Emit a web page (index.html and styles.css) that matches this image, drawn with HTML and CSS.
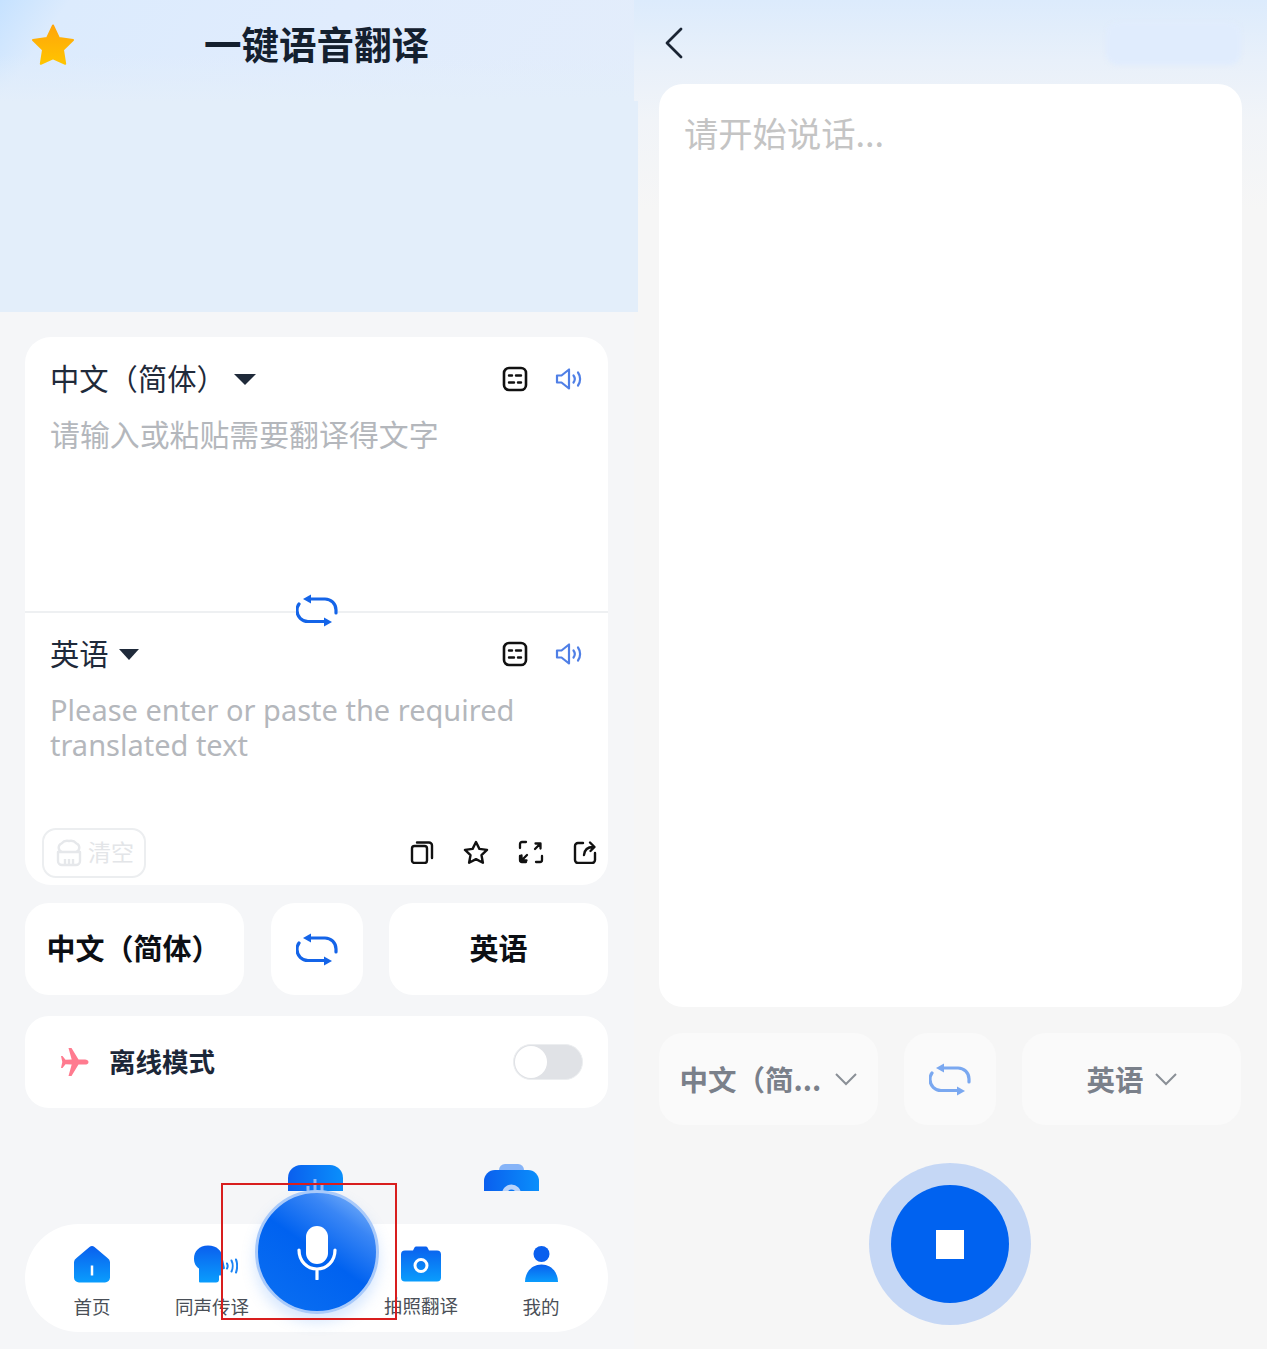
FILE: index.html
```html
<!DOCTYPE html>
<html lang="zh-CN">

<head>
    <meta charset="UTF-8">
    <meta name="viewport" content="width=device-width, initial-scale=1.0">
    <title>一键语音翻译</title>
    <link rel="stylesheet" href="styles.css">
</head>

<body>
    <svg class="defs" width="0" height="0">
        <defs>
            <linearGradient id="navBlue" x1="0" y1="0" x2="0" y2="1">
                <stop offset="0" stop-color="#0a5fee" />
                <stop offset="1" stop-color="#0a9dfd" />
            </linearGradient>
            <linearGradient id="peekBlue" x1="0" y1="0" x2="1" y2="0">
                <stop offset="0" stop-color="#0a5fee" />
                <stop offset="1" stop-color="#0a8ffb" />
            </linearGradient>
            <linearGradient id="starGold" x1="0" y1="0" x2="0" y2="1">
                <stop offset="0" stop-color="#ffa50a" />
                <stop offset="1" stop-color="#ffc400" />
            </linearGradient>
        </defs>
    </svg>

    <div class="screens">
        <!-- left screen -->
        <div class="screen-left">
            <div class="topbar">
                <svg class="star" width="44" height="42" viewBox="0 0 44 42">
                    <path d="M22 1.5l6 12.6 14 1.9-10 9.8 2.2 14-12.2-5.4-12.2 5.4 2.2-14-10-9.8 14-1.9z" fill="url(#starGold)" stroke="url(#starGold)" stroke-width="2" stroke-linejoin="round" />
                </svg>
                <div class="title">一键语音翻译</div>
            </div>
            <div class="banner"></div>

            <div class="content">
                <div class="card">
                    <div class="source">
                        <div class="lang-row">
                            <span class="lang-name">中文（简体）</span>
                            <span class="caret caret-wide"></span>
                            <svg class="note-icon" width="26" height="26" viewBox="0 0 26 26">
                                <rect x="2" y="2" width="22" height="22" rx="5" fill="none" stroke="#111" stroke-width="2.6" />
                                <path d="M7 9.5h3M14 9.5h5M7 16.5h5M16 16.5h3" stroke="#111" stroke-width="2.4" stroke-linecap="round" />
                            </svg>
                            <svg class="sound-icon" width="28" height="24" viewBox="0 0 28 24">
                                <path d="M2 8.5h4.5L14 2.5v19l-7.500-6H2z" fill="none" stroke="#4f7fe6" stroke-width="2.200" stroke-linejoin="round" />
                                <path d="M18.500 8.500c1.500 2 1.500 5 0 7M23 5.500c2.800 3.800 2.800 9.200 0 13" fill="none" stroke="#4f7fe6" stroke-width="2.200" stroke-linecap="round" />
                            </svg>
                        </div>
                        <div class="placeholder">请输入或粘贴需要翻译得文字</div>
                    </div>

                    <div class="divider">
                        <svg class="divider-swap" width="42" height="33" viewBox="0 0 42 33">
                            <use href="#swapShape" />
                        </svg>
                    </div>

                    <div class="target">
                        <div class="lang-row">
                            <span class="lang-name">英语</span>
                            <span class="caret"></span>
                            <svg class="note-icon" width="26" height="26" viewBox="0 0 26 26">
                                <rect x="2" y="2" width="22" height="22" rx="5" fill="none" stroke="#111" stroke-width="2.6" />
                                <path d="M7 9.5h3M14 9.5h5M7 16.5h5M16 16.5h3" stroke="#111" stroke-width="2.4" stroke-linecap="round" />
                            </svg>
                            <svg class="sound-icon" width="28" height="24" viewBox="0 0 28 24">
                                <path d="M2 8.5h4.5L14 2.5v19l-7.500-6H2z" fill="none" stroke="#4f7fe6" stroke-width="2.200" stroke-linejoin="round" />
                                <path d="M18.500 8.500c1.500 2 1.500 5 0 7M23 5.500c2.800 3.800 2.800 9.200 0 13" fill="none" stroke="#4f7fe6" stroke-width="2.200" stroke-linecap="round" />
                            </svg>
                        </div>
                        <div class="translated">Please enter or paste the required translated text</div>
                        <div class="card-foot">
                            <div class="clear-btn">
                                <svg width="26" height="28" viewBox="0 0 26 28">
                                    <path d="M6 13a4.500 4.500 0 0 1-.5-8.500A7.500 7.500 0 0 1 13 2a7.500 7.500 0 0 1 7.500 2.500A4.500 4.500 0 0 1 20 13M2 13h22v9a4 4 0 0 1-4 4H6a4 4 0 0 1-4-4zM9 20v6M13 20v6M17 20v6" fill="none" stroke="#e6e8eb" stroke-width="2.400" stroke-linejoin="round" />
                                </svg>
                                <span class="clear-text">清空</span>
                            </div>
                            <div class="foot-icons">
                                <svg width="24" height="24" viewBox="0 0 24 24">
                                    <rect x="2" y="6" width="15" height="17" rx="2.500" fill="none" stroke="#111" stroke-width="2.400" />
                                    <path d="M7 2.500h12a3 3 0 0 1 3 3V18" fill="none" stroke="#111" stroke-width="2.400" stroke-linecap="round" />
                                </svg>
                                <svg width="26" height="24" viewBox="0 0 26 24">
                                    <path d="M13 2l3.400 6.900 7.600 1-5.500 5.300 1.400 7.500-6.900-3.600-6.900 3.600 1.400-7.500L2 9.900l7.600-1z" fill="none" stroke="#111" stroke-width="2.400" stroke-linejoin="round" />
                                </svg>
                                <svg width="26" height="24" viewBox="0 0 26 24">
                                    <path d="M2 8V4a2 2 0 0 1 2-2h4M24 16v4a2 2 0 0 1-2 2h-4M8 22H4a2 2 0 0 1-2-2v-4M9 15l-5 5M3.500 15.500V20.500H8.500M17 9l5-5M17.500 3.500H22.500V8.500" fill="none" stroke="#111" stroke-width="2.300" stroke-linecap="round" stroke-linejoin="round" />
                                </svg>
                                <svg width="24" height="24" viewBox="0 0 24 24">
                                    <path d="M10 3H5a3 3 0 0 0-3 3v14a3 3 0 0 0 3 3h14a3 3 0 0 0 3-3v-7" fill="none" stroke="#111" stroke-width="2.400" stroke-linecap="round" />
                                    <path d="M11 15c.5-5 3.500-8 9-8M17 2.500l4.500 4.500-4 4" fill="none" stroke="#111" stroke-width="2.400" stroke-linecap="round" stroke-linejoin="round" />
                                </svg>
                            </div>
                        </div>
                    </div>
                </div>

                <div class="lang-buttons lang-buttons-main">
                    <div class="lang-btn">中文（简体）</div>
                    <div class="swap-btn">
                        <svg width="42" height="33" viewBox="0 0 42 33">
                            <use href="#swapShape" />
                        </svg>
                    </div>
                    <div class="lang-btn lang-btn-short">英语</div>
                </div>

                <div class="offline">
                    <svg class="plane" width="28" height="28" viewBox="0 0 28 28">
                        <path d="M27.500 14c0 1.800-1.600 2.600-3.500 2.600h-6.500L10.500 28H7.500l3.200-11.400-6.200-.4L1.500 20H0l1.300-6L0 8h1.500l3 3.800 6.200-.4L7.500 0h3l7 11.400H24c1.900 0 3.500.8 3.500 2.600z" fill="#ff7b8f" />
                    </svg>
                    <span class="offline-text">离线模式</span>
                    <div class="toggle">
                        <div class="knob"></div>
                    </div>
                </div>

                <div class="peek">
                    <svg width="55" height="50" viewBox="0 0 55 50">
                        <path d="M0 14a13 13 0 0 1 13-13h29a13 13 0 0 1 13 13v36H0z" fill="url(#peekBlue)" />
                        <path d="M20 22v6M27 15v13M34 20v8" stroke="#8fb8f7" stroke-width="3" />
                    </svg>
                    <svg width="55" height="50" viewBox="0 0 55 50">
                        <path d="M15 6a6 6 0 0 1 6-6h13a6 6 0 0 1 6 6v4H15z" fill="#86b4f8" />
                        <path d="M0 17a11 11 0 0 1 11-11h33a11 11 0 0 1 11 11v33H0z" fill="url(#peekBlue)" />
                        <circle cx="27.500" cy="30" r="7" fill="none" stroke="#b9d3fa" stroke-width="5" />
                    </svg>
                </div>

                <div class="tabbar">
                    <div class="tab">
                        <svg class="tab-icon" width="36" height="37" viewBox="0 0 36 37">
                            <path d="M15.500 1.500a4 4 0 0 1 5 0l13 11a5 5 0 0 1 2.500 4V32a5 5 0 0 1-5 5H5a5 5 0 0 1-5-5V16.500a5 5 0 0 1 2.500-4z" fill="url(#navBlue)" />
                            <path d="M18 20v10" stroke="#fff" stroke-width="2.500" />
                        </svg>
                        <span class="tab-label">首页</span>
                    </div>
                    <div class="tab">
                        <svg class="tab-icon head-icon" width="44" height="37" viewBox="0 0 44 37">
                            <path d="M14 0C5 0 0 6 0 13c0 5 2 8 5 10v13a1 1 0 0 0 1 1h16a3 3 0 0 0 3-3v-4h1a3 3 0 0 0 3-3v-3l2-1-2-9C28 5 23 0 14 0z" fill="url(#navBlue)" />
                            <path d="M33 18c.8 1.500.8 3.500 0 5M37.500 15c1.500 3 1.500 8 0 11M42 14c1.500 3.500 1.500 9.500 0 13" fill="none" stroke="#1c84f4" stroke-width="2" stroke-linecap="round" />
                        </svg>
                        <span class="tab-label">同声传译</span>
                    </div>
                    <div class="tab tab-after-mic">
                        <svg class="tab-icon" width="40" height="35" viewBox="0 0 40 35">
                            <path d="M12 4l1.500-3a2 2 0 0 1 2-1h9a2 2 0 0 1 2 1L28 4h8a4 4 0 0 1 4 4v23a4 4 0 0 1-4 4H4a4 4 0 0 1-4-4V8a4 4 0 0 1 4-4z" fill="url(#navBlue)" />
                            <circle cx="20" cy="19" r="6" fill="none" stroke="#fff" stroke-width="3" />
                        </svg>
                        <span class="tab-label tab-label-up">拍照翻译</span>
                    </div>
                    <div class="tab">
                        <svg class="tab-icon" width="33" height="36" viewBox="0 0 33 36">
                            <circle cx="16.500" cy="8" r="8" fill="#0a5fee" />
                            <path d="M0 36c0-10 7-17.500 16.500-17.500S33 26 33 36z" fill="url(#navBlue)" />
                        </svg>
                        <span class="tab-label">我的</span>
                    </div>

                    <div class="mic-btn">
                        <svg width="40" height="54" viewBox="0 0 40 54">
                            <rect x="9" y="0" width="22" height="38" rx="11" fill="#fff" />
                            <path d="M2 24c0 11 8 19 18 19s18-8 18-19M20 43v10" fill="none" stroke="#fff" stroke-width="3.200" stroke-linecap="round" />
                        </svg>
                    </div>
                    <div class="red-box"></div>
                </div>
            </div>
        </div>

        <!-- right screen -->
        <div class="screen-right">
            <div class="topbar-right">
                <svg width="20" height="32" viewBox="0 0 20 32">
                    <path d="M17 2L3 16l14 14" fill="none" stroke="#1a2433" stroke-width="2.800" stroke-linecap="round" stroke-linejoin="round" />
                </svg>
                <div class="blur-blob"></div>
            </div>
            <div class="speech-card">
                <div class="speech-hint">请开始说话...</div>
            </div>
            <div class="lang-buttons lang-buttons-muted">
                <div class="lang-btn lang-btn-muted">
                    <span>中文（简...</span>
                    <svg width="22" height="14" viewBox="0 0 22 14">
                        <path d="M1 2l10 10L21 2" fill="none" stroke="#8a8f96" stroke-width="2" />
                    </svg>
                </div>
                <div class="swap-btn swap-btn-muted">
                    <svg width="42" height="33" viewBox="0 0 42 33">
                        <use href="#swapShape" />
                    </svg>
                </div>
                <div class="lang-btn lang-btn-muted lang-btn-tight">
                    <span>英语</span>
                    <svg width="22" height="14" viewBox="0 0 22 14">
                        <path d="M1 2l10 10L21 2" fill="none" stroke="#8a8f96" stroke-width="2" />
                    </svg>
                </div>
            </div>
            <div class="stop-wrap">
                <div class="stop-ring">
                    <div class="stop-btn">
                        <div class="stop-square"></div>
                    </div>
                </div>
            </div>
        </div>
    </div>

    <svg class="defs" width="0" height="0">
        <defs>
            <g id="swapShape">
                <path d="M40 19v-3A11 11 0 0 0 29 5H12" fill="none" stroke="currentColor" stroke-width="3.200" stroke-linecap="round" />
                <path d="M7 5l8-4.500v9z" fill="currentColor" />
                <path d="M3 10c-1.500 2-2 4-2 6.500a11 11 0 0 0 11 11h17" fill="none" stroke="currentColor" stroke-width="3.200" stroke-linecap="round" />
                <path d="M36 28l-8-4.500v9z" fill="currentColor" />
            </g>
        </defs>
    </svg>
</body>

</html>
```

FILE: styles.css
```css
* {
    box-sizing: border-box;
}

html,
body {
    margin: 0;
    padding: 0;
}

body {
    width: 1267px;
    height: 1349px;
    overflow: hidden;
    font-family: "Noto Sans CJK SC", "Noto Sans", sans-serif;
    background: #f5f6f8;
}

.defs {
    position: absolute;
}

.screens {
    display: flex;
    height: 1349px;
}

/* left screen */
.screen-left {
    width: 634px;
    background: #f5f6f8;
}

.topbar {
    display: flex;
    align-items: center;
    height: 101px;
    padding: 2px 0 13px 31px;
    background: linear-gradient(180deg, rgba(227, 238, 250, 0) 55%, #e3eefa 100%), linear-gradient(125deg, #c6e2ff 0, #dcebfd 10%, #e0ecfd 50%, #e3edfb 100%);
}

.title {
    margin-left: 129px;
    padding-bottom: 4px;
    font-size: 37.500px;
    font-weight: 700;
    color: #14202f;
    line-height: 44px;
}

.banner {
    position: relative;
    z-index: 1;
    width: 638px;
    height: 211px;
    background: #e3eefa;
}

.content {
    padding: 25px 26px 0 25px;
}

.card {
    display: flex;
    flex-direction: column;
    height: 548px;
    background: #fff;
    border-radius: 26px;
}

.source {
    height: 274px;
    padding: 22px 25px 0;
}

.lang-row {
    display: flex;
    align-items: center;
    height: 40px;
}

.lang-name {
    padding-bottom: 4px;
    font-size: 29.300px;
    line-height: 36px;
    color: #1f2a3a;
}

.caret {
    width: 0;
    height: 0;
    margin-left: 10px;
    border-left: 10px solid transparent;
    border-right: 10px solid transparent;
    border-top: 11px solid #1f2a3a;
}

.caret-wide {
    margin-left: 8px;
    border-left-width: 11px;
    border-right-width: 11px;
}

.note-icon {
    margin-left: auto;
}

.sound-icon {
    margin-left: 27px;
}

.placeholder {
    margin-top: 14px;
    font-size: 29.900px;
    line-height: 40px;
    color: #b4b7bc;
}

.divider {
    position: relative;
    height: 2px;
    background: #eef0f2;
}

.divider-swap {
    position: absolute;
    left: 271px;
    top: -17px;
    color: #1464e8;
    background: #fff;
}

.target {
    display: flex;
    flex-direction: column;
    flex: 1;
    padding: 21px 25px 7px 25px;
}

.translated {
    width: 490px;
    margin-top: 18px;
    font-family: "Noto Sans", sans-serif;
    font-size: 29px;
    line-height: 35px;
    color: #b4b7bc;
}

.card-foot {
    display: flex;
    align-items: center;
    justify-content: space-between;
    margin: auto -14px 0 -8px;
}

.clear-btn {
    display: flex;
    align-items: center;
    gap: 6px;
    width: 104px;
    height: 50px;
    padding-left: 12px;
    border: 2px solid #eceef0;
    border-radius: 14px;
}

.clear-text {
    padding-bottom: 4px;
    font-size: 23px;
    line-height: 30px;
    color: #e3e5e8;
}

.foot-icons {
    display: flex;
    align-items: center;
    gap: 29px;
    padding-bottom: 2px;
}

.lang-buttons {
    display: flex;
    gap: 26px;
}

.lang-buttons-main {
    margin-top: 18px;
}

.lang-buttons-main .swap-btn {
    margin-left: 1px;
}

.lang-btn {
    display: flex;
    align-items: center;
    justify-content: center;
    width: 219px;
    height: 92px;
    padding: 0 2px 4px 0;
    background: #fff;
    border-radius: 24px;
    font-size: 29px;
    font-weight: 700;
    color: #0c0f14;
}

.lang-btn-short {
    padding-right: 0;
}

.swap-btn {
    display: flex;
    align-items: center;
    justify-content: center;
    width: 92px;
    height: 92px;
    background: #fff;
    border-radius: 24px;
    color: #1464e8;
}

.offline {
    display: flex;
    align-items: center;
    height: 92px;
    margin-top: 21px;
    padding: 0 25px 0 36px;
    background: #fff;
    border-radius: 24px;
}

.offline-text {
    margin-left: 20px;
    padding-bottom: 4px;
    font-size: 26.500px;
    font-weight: 700;
    color: #1c2738;
}

.toggle {
    width: 70px;
    height: 36px;
    margin-left: auto;
    padding: 1px;
    background: #e0e2e6;
    border: 1px solid #eceef0;
    border-radius: 18px;
}

.knob {
    width: 32px;
    height: 32px;
    background: #fff;
    border-radius: 50%;
}

.peek {
    display: flex;
    gap: 141px;
    height: 27px;
    margin-top: 56px;
    padding-left: 263px;
    overflow: hidden;
}

.tabbar {
    position: relative;
    display: flex;
    height: 108px;
    margin-top: 33px;
    padding: 21px 0 0 27px;
    background: #fff;
    border-radius: 54px;
    gap: 40px;
}

.tab {
    display: flex;
    flex-direction: column;
    align-items: center;
    width: 80px;
}

.tab-after-mic {
    margin-left: 89px;
}

.tab-icon {
    height: 38px;
    flex: none;
}

.head-icon {
    margin-left: 8px;
}

.tab-label {
    margin-top: 11px;
    font-size: 18.500px;
    line-height: 24px;
    white-space: nowrap;
    color: #4a4f57;
}

.tab-label-up {
    margin-top: 10px;
}

.mic-btn {
    position: absolute;
    left: 230px;
    top: -34px;
    display: flex;
    align-items: center;
    justify-content: center;
    width: 124px;
    height: 124px;
    padding-top: 2px;
    border: 3px solid #a9cafa;
    border-radius: 50%;
    background: linear-gradient(215deg, #8fc0fb 0, #3a86f5 24%, #0062f0 50%, #0b70f2 100%);
    box-shadow: 0 8px 14px rgba(90, 160, 250, 0.25);
}

.red-box {
    position: absolute;
    left: 196px;
    top: -41px;
    width: 176px;
    height: 137px;
    border: 2px solid #d81e1e;
}

/* right screen */
.screen-right {
    width: 633px;
    padding: 0 25px;
    background: linear-gradient(180deg, #dcebfc 0, #e8f0fa 60px, #f1f4f8 120px, #f6f6f6 210px);
}

.topbar-right {
    display: flex;
    align-items: center;
    justify-content: space-between;
    height: 84px;
    padding: 0 1px 0 5px;
}

.topbar-right svg {
    margin-top: 2px;
}

.blur-blob {
    width: 135px;
    height: 43px;
    margin-top: 3px;
    background: #e0ecfd;
    border-radius: 12px;
    filter: blur(2px);
}

.speech-card {
    height: 923px;
    padding: 24px 25px;
    background: #fff;
    border-radius: 24px;
}

.speech-hint {
    font-size: 34.300px;
    line-height: 48px;
    color: #c4c4c4;
}

.lang-buttons-muted {
    margin-top: 26px;
}

.lang-btn-muted {
    gap: 14px;
    padding: 0;
    background: #fafafa;
    font-size: 28.500px;
    color: #7a808a;
}

.lang-btn-tight {
    gap: 11px;
}

.lang-btn-muted span {
    padding-bottom: 2px;
}

.swap-btn-muted {
    background: #fafafa;
    color: #7aa8f0;
}

.stop-wrap {
    display: flex;
    justify-content: center;
    margin-top: 38px;
    padding-right: 2px;
}

.stop-ring {
    display: flex;
    align-items: center;
    justify-content: center;
    width: 162px;
    height: 162px;
    background: #c5d7f5;
    border-radius: 50%;
}

.stop-btn {
    display: flex;
    align-items: center;
    justify-content: center;
    width: 118px;
    height: 118px;
    background: #0062f0;
    border-radius: 50%;
}

.stop-square {
    width: 28px;
    height: 29px;
    background: #fff;
}
```
